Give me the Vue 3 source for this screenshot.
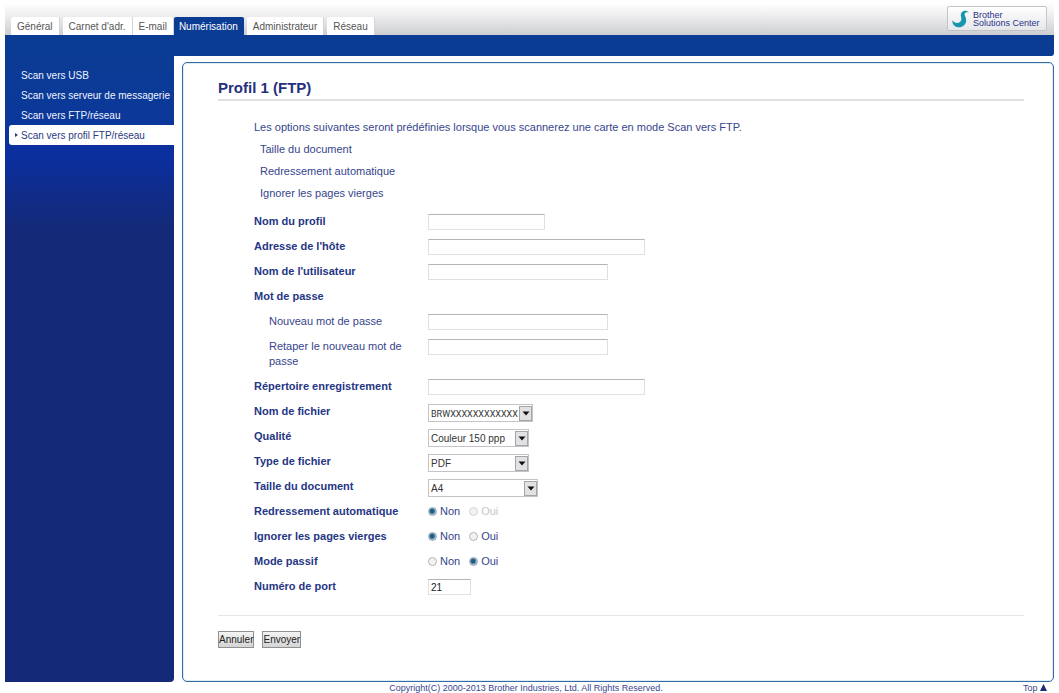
<script setup>
import { reactive } from 'vue'

const tabs = [
  { label: 'Général', apart: false },
  { label: "Carnet d'adr.", apart: true },
  { label: 'E-mail', apart: false },
  { label: 'Numérisation', apart: false, active: true },
  { label: 'Administrateur', apart: true },
  { label: 'Réseau', apart: true }
]

const links = [
  { label: 'Scan vers USB' },
  { label: 'Scan vers serveur de messagerie' },
  { label: 'Scan vers FTP/réseau' },
  { label: 'Scan vers profil FTP/réseau', active: true }
]

const fields = [
  { id: 'profil', label: 'Nom du profil', kind: 'text', size: 'short' },
  { id: 'hote', label: "Adresse de l'hôte", kind: 'text', size: 'long' },
  { id: 'utilisateur', label: "Nom de l'utilisateur", kind: 'text', size: 'medium' },
  { id: 'passe', label: 'Mot de passe', kind: 'heading' },
  { id: 'nouveau', label: 'Nouveau mot de passe', kind: 'password', size: 'medium', sub: true },
  { id: 'retaper', label: 'Retaper le nouveau mot de passe', kind: 'password', size: 'medium', sub: true },
  { id: 'repertoire', label: 'Répertoire enregistrement', kind: 'text', size: 'long' },
  { id: 'fichier', label: 'Nom de fichier', kind: 'select', size: 'name', options: ['BRWXXXXXXXXXXXX'] },
  { id: 'qualite', label: 'Qualité', kind: 'select', size: 'basic', options: ['Couleur 150 ppp'] },
  { id: 'type', label: 'Type de fichier', kind: 'select', size: 'basic', options: ['PDF'] },
  { id: 'taille', label: 'Taille du document', kind: 'select', size: 'wide', options: ['A4'] },
  { id: 'redressement', label: 'Redressement automatique', kind: 'radio', locked: true },
  { id: 'ignorer', label: 'Ignorer les pages vierges', kind: 'radio' },
  { id: 'passif', label: 'Mode passif', kind: 'radio' },
  { id: 'port', label: 'Numéro de port', kind: 'text', size: 'port' }
]

const form = reactive({
  profil: '',
  hote: '',
  utilisateur: '',
  nouveau: '',
  retaper: '',
  repertoire: '',
  fichier: 'BRWXXXXXXXXXXXX',
  qualite: 'Couleur 150 ppp',
  type: 'PDF',
  taille: 'A4',
  redressement: 'Non',
  ignorer: 'Non',
  passif: 'Oui',
  port: '21'
})
</script>

<template>
  <div id="top" class="page">
    <header class="header">
      <nav class="tabs">
        <a
          v-for="tab in tabs"
          :key="tab.label"
          href="#"
          class="tab"
          :class="{ apart: tab.apart, active: tab.active }"
        >{{ tab.label }}</a>
      </nav>
      <a href="#" class="brand">
        <svg class="brand-mark" viewBox="0 0 20 20" aria-hidden="true">
          <path
            d="M0.500 11.500C2 13.800 4 14.800 6 14.500C9 14 10.800 12 10.400 9.500C10 7 9 5 10.800 2.500C12.500 0.500 16 0 19 2.600C16.500 2.200 14.200 2.600 14 4.500C13.800 6.500 16 8.500 15.800 12C15.400 16.500 11.500 19.500 7 19.200C2.500 18.800 0 15.500 0.500 11.500Z"
            fill="#1795ad"
          />
        </svg>
        <span>Brother<br>Solutions Center</span>
      </a>
    </header>
    <div class="band"></div>

    <div class="body">
      <aside class="side">
        <nav>
          <a
            v-for="link in links"
            :key="link.label"
            href="#"
            class="side-link"
            :class="{ active: link.active }"
          ><span class="marker"></span>{{ link.label }}</a>
        </nav>
      </aside>

      <main class="panel">
        <h1>Profil 1 (FTP)</h1>
        <form @submit.prevent>
          <div class="intro">
            <p>Les options suivantes seront prédéfinies lorsque vous scannerez une carte en mode Scan vers FTP.</p>
            <ul>
              <li>Taille du document</li>
              <li>Redressement automatique</li>
              <li>Ignorer les pages vierges</li>
            </ul>
          </div>

          <div class="fields">
            <div v-for="f in fields" :key="f.id" class="row">
              <span v-if="f.kind === 'heading' || f.kind === 'radio'" :id="f.id + '-label'" class="label">{{ f.label }}</span>
              <label v-else :for="f.id" class="label" :class="{ sub: f.sub }">{{ f.label }}</label>

              <input
                v-if="f.kind === 'text' || f.kind === 'password'"
                :id="f.id"
                v-model="form[f.id]"
                :type="f.kind"
                class="box"
                :class="f.size"
              >
              <div v-else-if="f.kind === 'select'" class="pick" :class="f.size">
                <select :id="f.id" v-model="form[f.id]">
                  <option v-for="o in f.options" :key="o">{{ o }}</option>
                </select>
                <span class="arrow">
                  <svg viewBox="0 0 8 5" aria-hidden="true"><path d="M0.500 0.500h7L4 4.500z" fill="#111" /></svg>
                </span>
              </div>
              <div
                v-else-if="f.kind === 'radio'"
                class="choices"
                role="radiogroup"
                :aria-labelledby="f.id + '-label'"
              >
                <label
                  v-for="o in ['Non', 'Oui']"
                  :key="o"
                  class="choice"
                  :class="{ off: f.locked && o === 'Oui' }"
                >
                  <input
                    v-model="form[f.id]"
                    type="radio"
                    :name="f.id"
                    :value="o"
                    :disabled="f.locked && o === 'Oui'"
                  >{{ o }}
                </label>
              </div>
            </div>
          </div>

          <div class="actions">
            <button type="button">Annuler</button>
            <button type="submit">Envoyer</button>
          </div>
        </form>
      </main>
    </div>

    <footer class="footer">
      <span></span>
      <span>Copyright(C) 2000-2013 Brother Industries, Ltd. All Rights Reserved.</span>
      <a href="#top">Top
        <svg viewBox="0 0 7 7" aria-hidden="true"><path d="M3.500 0L7 7H0z" fill="#1c2b78" /></svg>
      </a>
    </footer>
  </div>
</template>

<style>
body {
  margin: 0;
  background: #fff;
}
</style>

<style scoped>
.page {
  box-sizing: border-box;
  min-height: 100vh;
  padding: 3px 5px 0;
  display: flex;
  flex-direction: column;
  font-family: "Liberation Sans", Arial, sans-serif;
  font-size: 11px;
  line-height: 15px;
  color: #36458c;
}

a {
  color: inherit;
  text-decoration: none;
}

.header {
  height: 32px;
  display: flex;
  justify-content: space-between;
  align-items: flex-end;
  padding: 0 7px 0 6px;
  background: linear-gradient(#fff, #f0f0f1 35%, #cdced2);
}

.tabs {
  display: flex;
}

.tab {
  box-sizing: border-box;
  height: 18px;
  padding: 0 6px;
  border-right: 1px solid #d4d4d8;
  border-radius: 2px 2px 0 0;
  background: #fff;
  color: #555;
  font-size: 10px;
  line-height: 20px;
}

.tab.apart {
  margin-left: 3px;
}

.tab.active {
  padding: 0 5px;
  background: #0b3c94;
  border-color: #0b3c94;
  color: #fff;
}

.brand {
  box-sizing: border-box;
  width: 100px;
  height: 25px;
  margin-bottom: 4px;
  padding-left: 3px;
  display: flex;
  align-items: center;
  gap: 2px;
  border: 1px solid #c3c4ca;
  border-radius: 2px;
  background: linear-gradient(#fff, #e6e7ea);
  color: #2b3187;
  font-size: 9px;
  line-height: 8px;
  white-space: nowrap;
}

.brand-mark {
  width: 20px;
  height: 18px;
  flex: none;
}

.band {
  height: 21px;
  background: #0b3c94;
  border-radius: 0 0 3px 0;
}

.body {
  flex: 1;
  display: flex;
  gap: 8px;
}

.side {
  width: 169px;
  flex: none;
  padding-top: 9px;
  box-sizing: border-box;
  border-radius: 0 0 4px 0;
  background: linear-gradient(#0b3c94, #0b3899 60px, #0b2f9f 100px, #142a79 170px, #142a79);
}

.side-link {
  display: flex;
  align-items: center;
  height: 20px;
  margin-left: 4px;
  color: #f0f4ff;
  font-size: 10px;
  white-space: nowrap;
}

.side-link.active {
  background: #fff;
  color: #2b3a80;
  border-radius: 3px 0 0 3px;
}

.marker {
  width: 6px;
  margin-left: 6px;
}

.active .marker::before {
  content: "";
  display: block;
  width: 0;
  border: 2px solid transparent;
  border-left: 3px solid #2b3a80;
  border-right: 0;
}

.panel {
  flex: 1;
  min-width: 0;
  margin-top: 6px;
  padding: 12px 29px 32px 35px;
  border: 1px solid #356ba3;
  border-radius: 5px;
  box-shadow: inset 0 0 0 1px #dcebf5;
}

h1 {
  margin: 0;
  height: 24px;
  border-bottom: 2px solid #e0e0e2;
  color: #25307c;
  font-size: 15px;
  line-height: 25px;
}

.intro {
  padding: 15px 0 0 36px;
  line-height: 22px;
}

p,
ul {
  margin: 0;
  padding: 0;
}

ul {
  padding-left: 6px;
  list-style: none;
}

.fields {
  padding: 5px 0 16px 36px;
  border-bottom: 1px solid #e6e6e8;
}

.row {
  display: grid;
  grid-template-columns: 174px 1fr;
  align-items: start;
  min-height: 25px;
}

.label {
  padding: 5px 0;
  color: #263684;
  font-weight: bold;
}

.label.sub {
  padding: 5px 20px 5px 15px;
  color: inherit;
  font-weight: normal;
}

.box {
  box-sizing: border-box;
  height: 16px;
  margin: 5px 0 0;
  padding: 0 2px;
  border: 1px solid #e0e0e2;
  border-top-color: #b4b4b8;
  background: #fff;
  color: #222;
  font: 10px "Liberation Sans", Arial, sans-serif;
}

.box.short {
  width: 117px;
}

.box.medium {
  width: 180px;
}

.box.long {
  width: 217px;
}

.box.port {
  width: 43px;
}

.pick {
  position: relative;
  height: 18px;
  margin-top: 5px;
}

.pick.name {
  width: 105px;
}

.pick.basic {
  width: 101px;
}

.pick.wide {
  width: 110px;
}

select {
  appearance: none;
  box-sizing: border-box;
  width: 100%;
  height: 18px;
  margin: 0;
  padding: 1px 13px 0 2px;
  display: block;
  border: 1px solid #c4c4c8;
  border-radius: 0;
  background: #fff;
  color: #333;
  font: 10px "Liberation Sans", Arial, sans-serif;
}

.name select {
  font: 9px Roboto, "Liberation Sans", sans-serif;
}

.arrow {
  position: absolute;
  top: 2px;
  right: 1px;
  box-sizing: border-box;
  width: 13px;
  height: 15px;
  display: flex;
  align-items: center;
  justify-content: center;
  border: 1px solid #a5a5a8;
  background: #e2e2e4;
  pointer-events: none;
}

.arrow svg {
  width: 8px;
  height: 5px;
}

.choices {
  display: flex;
  gap: 9px;
  padding-top: 5px;
}

.choice {
  display: flex;
  align-items: center;
  gap: 3px;
}

.choice.off {
  color: #c6c6ce;
}

.choice input {
  appearance: none;
  box-sizing: border-box;
  width: 9px;
  height: 9px;
  margin: 0;
  border: 1px solid #b5b5b5;
  border-radius: 50%;
  background: #f2f2f2;
}

.choice input:checked {
  border-color: #9aa8b4;
  background: radial-gradient(circle at 45% 45%, #1f5f87 0 2px, #8fb0c4 3px, #e6eef2);
}

.choice.off input {
  border-color: #d4d4d4;
}

.actions {
  display: flex;
  gap: 8px;
  padding-top: 15px;
}

button {
  height: 17px;
  margin: 0;
  padding: 0;
  border: 1px solid #909090;
  border-radius: 0;
  background: linear-gradient(#f4f4f4, #d4d4d4);
  color: #222;
  font: 10px "Liberation Sans", Arial, sans-serif;
}

.footer {
  height: 11px;
  display: grid;
  grid-template-columns: 1fr auto 1fr;
  padding-right: 7px;
  color: #3a4590;
  font-size: 9px;
  line-height: 13px;
}

.footer a {
  text-align: right;
}

.footer svg {
  width: 7px;
  height: 7px;
}
</style>
